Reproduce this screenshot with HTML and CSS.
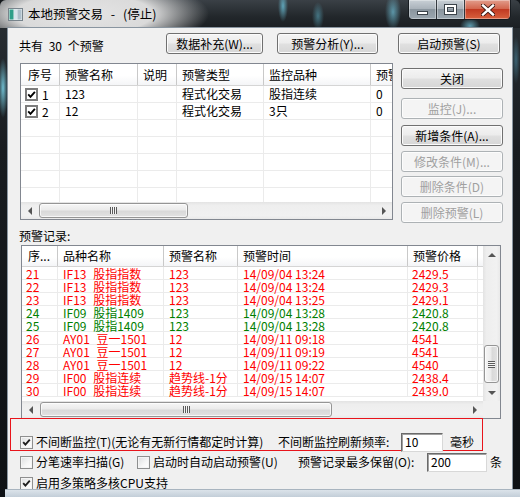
FILE: index.html
```html
<!DOCTYPE html>
<html lang="zh-CN">
<head>
<meta charset="utf-8">
<title>本地预警交易</title>
<link rel="stylesheet" href="styles.css">
</head>
<body>
<div class="win">
  <div class="titlebar">
    <div class="tb-left">
      <svg class="appicon" width="15" height="13" viewBox="0 0 15 13">
        <rect x="0.5" y="0.5" width="14" height="12" fill="#e9eef1" stroke="#78848c"/>
        <rect x="1.5" y="1.5" width="4" height="10" fill="#2f9f8a"/>
        <rect x="6" y="1.5" width="3" height="10" fill="#d7e4ec"/>
        <rect x="9.5" y="1.5" width="4" height="10" fill="#aebfcb"/>
      </svg>
      <span class="title">本地预警交易 - (停止)</span>
    </div>
    <div class="caps">
      <div class="cap cap-min"><i class="g-min"></i></div>
      <div class="cap cap-max"><i class="g-max"></i></div>
      <div class="cap cap-close">
        <svg width="14" height="12" viewBox="0 0 14 12">
          <path d="M2 1.5 L12 10.5 M12 1.5 L2 10.5" stroke="#3a1510" stroke-width="4.2" stroke-linecap="square"/>
          <path d="M2 1.5 L12 10.5 M12 1.5 L2 10.5" stroke="#ffffff" stroke-width="2.4" stroke-linecap="square"/>
        </svg>
      </div>
    </div>
  </div>

  <div class="frame-mid">
    <div class="client">
      <div class="toprow">
        <span class="count">共有 30 个预警</span>
        <button class="btn b-w1">数据补充(W)...</button>
        <button class="btn b-w2">预警分析(Y)...</button>
        <button class="btn b-w3">启动预警(S)</button>
      </div>

      <div class="mid">
        <div class="lv lv1">
          <div class="lv1-view">
            <div class="lv-hdr">
              <div class="hc">序号</div>
              <div class="hc">预警名称</div>
              <div class="hc">说明</div>
              <div class="hc">预警类型</div>
              <div class="hc">监控品种</div>
              <div class="hc">预警</div>
            </div>
            <div class="lv1-body">
              <div class="lv-row">
                <div class="c c-chk"><span class="cb cb-list"><svg viewBox="0 0 9 9" width="9" height="9"><path d="M1.2 4.4 L3.5 6.8 L7.9 1.8" fill="none" stroke="#000" stroke-width="1.9"/></svg></span>1</div>
                <div class="c">123</div>
                <div class="c"></div>
                <div class="c">程式化交易</div>
                <div class="c">股指连续</div>
                <div class="c">0</div>
              </div>
              <div class="lv-row">
                <div class="c c-chk"><span class="cb cb-list"><svg viewBox="0 0 9 9" width="9" height="9"><path d="M1.2 4.4 L3.5 6.8 L7.9 1.8" fill="none" stroke="#000" stroke-width="1.9"/></svg></span>2</div>
                <div class="c">12</div>
                <div class="c"></div>
                <div class="c">程式化交易</div>
                <div class="c">3只</div>
                <div class="c">0</div>
              </div>
              <div class="lv-row"><div class="c"></div><div class="c"></div><div class="c"></div><div class="c"></div><div class="c"></div><div class="c"></div></div>
              <div class="lv-row"><div class="c"></div><div class="c"></div><div class="c"></div><div class="c"></div><div class="c"></div><div class="c"></div></div>
              <div class="lv-row"><div class="c"></div><div class="c"></div><div class="c"></div><div class="c"></div><div class="c"></div><div class="c"></div></div>
              <div class="lv-row"><div class="c"></div><div class="c"></div><div class="c"></div><div class="c"></div><div class="c"></div><div class="c"></div></div>
              <div class="lv-row"><div class="c"></div><div class="c"></div><div class="c"></div><div class="c"></div><div class="c"></div><div class="c"></div></div>
            </div>
          </div>
          <div class="hs">
            <div class="arr arr-l"></div>
            <div class="th-h th-lv1"><i class="grip-h"></i></div>
            <div class="hs-fill"></div>
            <div class="arr arr-r"></div>
          </div>
        </div>

        <div class="side">
          <button class="btn s1">关闭</button>
          <button class="btn s2" disabled>监控(J)...</button>
          <button class="btn s3">新增条件(A)...</button>
          <button class="btn s4" disabled>修改条件(M)...</button>
          <button class="btn s5" disabled>删除条件(D)</button>
          <button class="btn s6" disabled>删除预警(L)</button>
        </div>
      </div>

      <div class="lbl">预警记录:</div>

      <div class="lv lv2">
        <div class="lv2-view">
          <div class="lv-hdr">
            <div class="hc">序...</div>
            <div class="hc">品种名称</div>
            <div class="hc">预警名称</div>
            <div class="hc">预警时间</div>
            <div class="hc">预警价格</div>
            <div class="hc hc-last"></div>
          </div>
          <div class="lv2-body">
            <div class="lv-row red"><div class="c">21</div><div class="c">IF13 股指指数</div><div class="c">123</div><div class="c">14/09/04 13:24</div><div class="c">2429.5</div><div class="c"></div></div>
            <div class="lv-row red"><div class="c">22</div><div class="c">IF13 股指指数</div><div class="c">123</div><div class="c">14/09/04 13:24</div><div class="c">2429.3</div><div class="c"></div></div>
            <div class="lv-row red"><div class="c">23</div><div class="c">IF13 股指指数</div><div class="c">123</div><div class="c">14/09/04 13:25</div><div class="c">2429.1</div><div class="c"></div></div>
            <div class="lv-row green"><div class="c">24</div><div class="c">IF09 股指1409</div><div class="c">123</div><div class="c">14/09/04 13:28</div><div class="c">2420.8</div><div class="c"></div></div>
            <div class="lv-row green"><div class="c">25</div><div class="c">IF09 股指1409</div><div class="c">123</div><div class="c">14/09/04 13:28</div><div class="c">2420.8</div><div class="c"></div></div>
            <div class="lv-row red"><div class="c">26</div><div class="c">AY01 豆一1501</div><div class="c">12</div><div class="c">14/09/11 09:18</div><div class="c">4541</div><div class="c"></div></div>
            <div class="lv-row red"><div class="c">27</div><div class="c">AY01 豆一1501</div><div class="c">12</div><div class="c">14/09/11 09:19</div><div class="c">4541</div><div class="c"></div></div>
            <div class="lv-row red"><div class="c">28</div><div class="c">AY01 豆一1501</div><div class="c">12</div><div class="c">14/09/11 09:22</div><div class="c">4540</div><div class="c"></div></div>
            <div class="lv-row red"><div class="c">29</div><div class="c">IF00 股指连续</div><div class="c">趋势线-1分</div><div class="c">14/09/15 14:07</div><div class="c">2438.4</div><div class="c"></div></div>
            <div class="lv-row red"><div class="c">30</div><div class="c">IF00 股指连续</div><div class="c">趋势线-1分</div><div class="c">14/09/15 14:07</div><div class="c">2439.0</div><div class="c"></div></div>
          </div>
        </div>
        <div class="vs">
          <div class="arr arr-u"></div>
          <div class="th-v"><i class="grip-v"></i></div>
          <div class="arr arr-d"></div>
        </div>
        <div class="hs">
          <div class="arr arr-l"></div>
          <div class="th-h th-lv2"><i class="grip-h"></i></div>
          <div class="hs-fill"></div>
          <div class="arr arr-r"></div>
        </div>
        <div class="corner"></div>
      </div>

      <div class="redbox">
        <div class="optrow">
          <span class="cb"><svg viewBox="0 0 11 11" width="11" height="11"><path d="M2.2 5.2 L4.4 7.6 L8.8 2.6" fill="none" stroke="#1e1e1e" stroke-width="1.9"/></svg></span>
          <span class="t t1">不间断监控(T)(无论有无新行情都定时计算)</span>
          <span class="t t2">不间断监控刷新频率:</span>
          <span class="inp inp1">10</span>
          <span class="t">毫秒</span>
        </div>
      </div>

      <div class="optrow row2">
        <span class="cb"></span>
        <span class="t t3">分笔速率扫描(G)</span>
        <span class="cb"></span>
        <span class="t t4">启动时自动启动预警(U)</span>
        <span class="t t5">预警记录最多保留(O):</span>
        <span class="inp inp2">200</span>
        <span class="t t6">条</span>
      </div>

      <div class="optrow row3">
        <span class="cb"><svg viewBox="0 0 11 11" width="11" height="11"><path d="M2.2 5.2 L4.4 7.6 L8.8 2.6" fill="none" stroke="#1e1e1e" stroke-width="1.9"/></svg></span>
        <span class="t">启用多策略多核CPU支持</span>
      </div>
    </div>
  </div>
  <div class="frame-bottom"></div>
</div>
</body>
</html>
```

FILE: styles.css
```css
* { box-sizing: border-box; }
html, body { margin: 0; padding: 0; }
body {
  width: 520px;
  height: 497px;
  overflow: hidden;
  background: #14181c;
  font-family: "Noto Sans CJK SC", "Noto Sans", sans-serif;
  font-size: 12px;
  color: #000;
}

.win {
  width: 520px;
  height: 497px;
  display: flex;
  flex-direction: column;
  border-radius: 6px 6px 0 0;
  background:
    radial-gradient(ellipse 5px 30px at 3px 88px, rgba(120,205,225,0.9), rgba(120,205,225,0)),
    radial-gradient(ellipse 4px 24px at 516px 60px, rgba(90,170,200,0.45), rgba(90,170,200,0)),
    linear-gradient(to bottom, #2a3035 0%, #181c20 30%, #0e1114 100%);
}

/* ---------- title bar ---------- */
.titlebar {
  height: 28px;
  flex: none;
  display: flex;
  justify-content: space-between;
  border-radius: 6px 6px 0 0;
  background:
    radial-gradient(ellipse 125px 36px at 84px 14px, #e4e4e4 0%, #dadada 55%, rgba(210,210,210,0) 100%),
    radial-gradient(ellipse 5px 16px at 283px 6px, rgba(110,200,225,0.75), rgba(110,200,225,0)),
    radial-gradient(ellipse 6px 14px at 318px 16px, rgba(100,190,215,0.5), rgba(100,190,215,0)),
    radial-gradient(ellipse 8px 18px at 393px 12px, rgba(120,205,230,0.65), rgba(120,205,230,0)),
    radial-gradient(ellipse 10px 8px at 470px 26px, rgba(120,205,230,0.7), rgba(120,205,230,0)),
    linear-gradient(#3a4046, #22272b 60%, #1b1f23);
}
.tb-left {
  display: flex;
  align-items: center;
  padding-left: 8px;
  height: 28px;
}
.appicon { display: block; margin-top: 1px; }
.title {
  margin-left: 5px;
  font-size: 12.5px;
  line-height: 28px;
  word-spacing: 5px;
  color: #000;
  white-space: nowrap;
}
.caps {
  display: flex;
  height: 20px;
  margin-right: 9px;
  border: 1px solid rgba(20,25,30,0.85);
  border-top: none;
  border-radius: 0 0 5px 5px;
  overflow: hidden;
}
.cap {
  height: 19px;
  display: flex;
  align-items: center;
  justify-content: center;
  box-shadow: inset 0 0 0 1px rgba(255,255,255,0.35);
}
.cap-min, .cap-max {
  width: 28px;
  border-right: 1px solid rgba(20,25,30,0.8);
  background: linear-gradient(#c9d0d6 0%, #aab3bb 45%, #8a959e 50%, #9ba7b0 100%);
}
.cap-close {
  width: 45px;
  background: linear-gradient(#e29d8c 0%, #d3674f 45%, #c13a22 50%, #d9613e 100%);
}
.g-min {
  display: block;
  width: 11px;
  height: 4px;
  margin-top: 6px;
  background: #fff;
  border: 1px solid #3b434a;
}
.g-max {
  display: block;
  width: 11px;
  height: 9px;
  border: 2px solid #fff;
  outline: 1px solid #3b434a;
  box-shadow: inset 0 0 0 1px #3b434a;
}

/* ---------- frame ---------- */
.frame-mid {
  display: flex;
  height: 461px;
  flex: none;
  padding: 0 8px;
}
.frame-bottom {
  height: 8px;
  flex: none;
  margin-left: 5px;
  background: linear-gradient(#dbe3ea, #c3ced8);
  border-top: 1px solid #a8b4bf;
}
.client {
  width: 504px;
  height: 461px;
  background: #f0f0f0;
  box-shadow: 0 0 0 1px #8995a0;
  display: flex;
  flex-direction: column;
}

/* ---------- buttons ---------- */
.btn {
  height: 21px;
  padding: 0;
  font-family: "Noto Sans CJK SC", "Noto Sans", sans-serif;
  font-size: 12px;
  line-height: 19px;
  color: #000;
  border: 1px solid #707070;
  border-radius: 3px;
  background: linear-gradient(#f4f4f4 0%, #ececec 48%, #e0e0e0 52%, #d6d6d6 100%);
  box-shadow: inset 0 0 0 1px #fbfbfb;
  white-space: nowrap;
}
.btn:disabled {
  color: #a0a0a0;
  border-color: #adb2b5;
  background: #f4f4f4;
  box-shadow: inset 0 0 0 1px #fcfcfc;
}

.toprow {
  display: flex;
  align-items: flex-start;
  height: 21px;
  margin-top: 5px;
  flex: none;
}
.count {
  width: 158px;
  padding-left: 11px;
  padding-top: 4px;
  line-height: 17px;
  word-spacing: 3px;
  white-space: nowrap;
}
.b-w1 { width: 97px; }
.b-w2 { width: 101px; margin-left: 14px; }
.b-w3 { width: 102px; margin-left: 20px; }

.mid {
  display: flex;
  margin-top: 9px;
  flex: none;
}
.side {
  display: flex;
  flex-direction: column;
  width: 102px;
  margin-left: 8px;
}
.s1 { margin-top: 5px; }
.s2 { margin-top: 9px; }
.s3 { margin-top: 6px; }
.s4 { margin-top: 5px; }
.s5 { margin-top: 4px; }
.s6 { margin-top: 5px; }

/* ---------- list views ---------- */
.lv {
  border: 1px solid #828790;
  background: #fff;
  overflow: hidden;
  flex: none;
}
.lv-hdr {
  display: grid;
  background: linear-gradient(#ffffff 0%, #ffffff 55%, #f4f5f7 100%);
  border-bottom: 1px solid #d5d5d5;
}
.hc {
  border-right: 1px solid #c9c9c9;
  padding-left: 5px;
  white-space: nowrap;
  overflow: hidden;
}
.hc-last { border-right: none; }
.lv-row {
  display: grid;
  background: linear-gradient(to top, #ebebeb 0, #ebebeb 1px, transparent 1px);
}
.c {
  border-right: 1px solid #ebebeb;
  padding-left: 5px;
  white-space: nowrap;
  overflow: hidden;
}

.lv1 {
  width: 373px;
  height: 157px;
  margin-left: 12px;
  display: flex;
  flex-direction: column;
}
.lv1-view {
  height: 138px;
  overflow: hidden;
}
.lv1 .lv-hdr, .lv1 .lv-row {
  width: 410px;
  grid-template-columns: 39px 78px 39px 87px 107px 60px;
}
.lv1 .lv-hdr { height: 22px; }
.lv1 .hc { line-height: 21px; }
.lv1 .lv-row { height: 17px; }
.lv1 .c { line-height: 16px; }
.lv1 .hc:first-child { padding-left: 7px; }
.c-chk {
  display: flex;
  align-items: center;
  padding-left: 4px;
}

.cb {
  width: 13px;
  height: 13px;
  flex: none;
  display: flex;
  align-items: center;
  justify-content: center;
  border: 1px solid #8e8f8f;
  background: linear-gradient(135deg, #dcdedf 0%, #f7f7f7 60%, #ffffff 100%);
  box-shadow: inset 0 0 0 1px #f4f4f4;
}
.cb svg { display: block; }
.cb-list {
  width: 13px;
  height: 13px;
  margin-right: 4px;
  border: 2px solid #7c7c7c;
  background: #fff;
  box-shadow: none;
}

.lbl {
  height: 22px;
  flex: none;
  padding: 5px 0 0 11px;
  line-height: 16px;
}

.lv2 {
  width: 480px;
  height: 174px;
  margin-left: 13px;
  display: grid;
  grid-template-columns: 461px 17px;
  grid-template-rows: 155px 17px;
}
.lv2-view { overflow: hidden; }
.lv2 .lv-hdr, .lv2 .lv-row {
  grid-template-columns: 36px 106px 74px 170px 70px 5px;
}
.lv2 .lv-hdr { height: 21px; }
.lv2 .hc { line-height: 20px; }
.lv2 .lv-row { height: 13px; }
.lv2 .c { line-height: 13px; overflow: visible; }
.lv2 .c:nth-child(2) { word-spacing: 4px; }
.lv2 .c:first-child, .lv2 .c:nth-child(5) { padding-left: 4px; }
.lv2 .hc:first-child { padding-left: 6px; }
.red { color: #ff0000; }
.green { color: #008000; }

/* ---------- scrollbars ---------- */
.hs {
  display: flex;
  height: 17px;
  flex: none;
  background: linear-gradient(#e3e3e3 0%, #eeeeee 20%, #f1f1f1 80%, #e9e9e9 100%);
}
.hs-fill { flex: 1; }
.vs {
  display: flex;
  flex-direction: column;
  width: 17px;
  background: linear-gradient(to right, #e3e3e3 0%, #eeeeee 20%, #f1f1f1 80%, #e9e9e9 100%);
}
.corner { background: #f0f0f0; }
.arr {
  width: 17px;
  height: 17px;
  flex: none;
  display: flex;
  align-items: center;
  justify-content: center;
}
.arr::before {
  content: "";
  display: block;
  width: 0;
  height: 0;
}
.arr-l::before {
  border-top: 4px solid transparent;
  border-bottom: 4px solid transparent;
  border-right: 4px solid #555;
}
.arr-r::before {
  border-top: 4px solid transparent;
  border-bottom: 4px solid transparent;
  border-left: 4px solid #555;
}
.arr-u::before {
  border-left: 4px solid transparent;
  border-right: 4px solid transparent;
  border-bottom: 4px solid #555;
}
.arr-d::before {
  border-left: 4px solid transparent;
  border-right: 4px solid transparent;
  border-top: 4px solid #555;
}
.arr-d { margin-top: auto; }
.th-h {
  height: 15px;
  margin-top: 1px;
  margin-left: 1px;
  border: 1px solid #959595;
  border-radius: 3px;
  background: linear-gradient(#f6f6f6 0%, #ebebeb 45%, #d9d9d9 55%, #e2e2e2 100%);
  box-shadow: inset 0 0 0 1px rgba(255,255,255,0.7);
  display: flex;
  align-items: center;
  justify-content: center;
  flex: none;
}
.th-lv1 { width: 149px; }
.th-lv2 { width: 292px; }
.grip-h {
  display: block;
  width: 7px;
  height: 7px;
  background: repeating-linear-gradient(to right, #5a5a5a 0 1px, #f4f4f4 1px 2px);
}
.th-v {
  width: 15px;
  height: 38px;
  margin-left: 1px;
  margin-top: 82px;
  flex: none;
  border: 1px solid #959595;
  border-radius: 3px;
  background: linear-gradient(to right, #f6f6f6 0%, #ebebeb 45%, #d9d9d9 55%, #e2e2e2 100%);
  box-shadow: inset 0 0 0 1px rgba(255,255,255,0.7);
  display: flex;
  align-items: center;
  justify-content: center;
}
.grip-v {
  display: block;
  width: 7px;
  height: 7px;
  background: repeating-linear-gradient(to bottom, #5a5a5a 0 1px, #f4f4f4 1px 2px);
}

/* ---------- options ---------- */
.redbox {
  width: 473px;
  height: 33px;
  margin: -1px 0 0 2px;
  flex: none;
  border: 1px solid #e8141b;
  padding: 14px 0 0 9px;
}
.optrow {
  display: flex;
  align-items: center;
  height: 18px;
  flex: none;
  white-space: nowrap;
}
.optrow .cb { margin-right: 3px; }
.t { line-height: 16px; white-space: nowrap; }
.t1 { width: 242px; }
.t2 { width: 123px; }
.inp {
  height: 19px;
  background: #fff;
  border: 1px solid;
  border-color: #6a6a6a #d8d8d8 #d8d8d8 #6a6a6a;
  box-shadow: inset 1px 1px 0 #a0a0a0;
  padding: 0 0 0 3px;
  line-height: 15px;
  flex: none;
}
.inp1 { width: 42px; margin-right: 7px; }
.row2 { margin-top: 2px; padding-left: 12px; }
.t3 { width: 101px; }
.t4 { width: 145px; }
.t5 { width: 129px; }
.inp2 { width: 60px; margin-right: 3px; }
.row3 { margin-top: 3px; padding-left: 12px; }
```
